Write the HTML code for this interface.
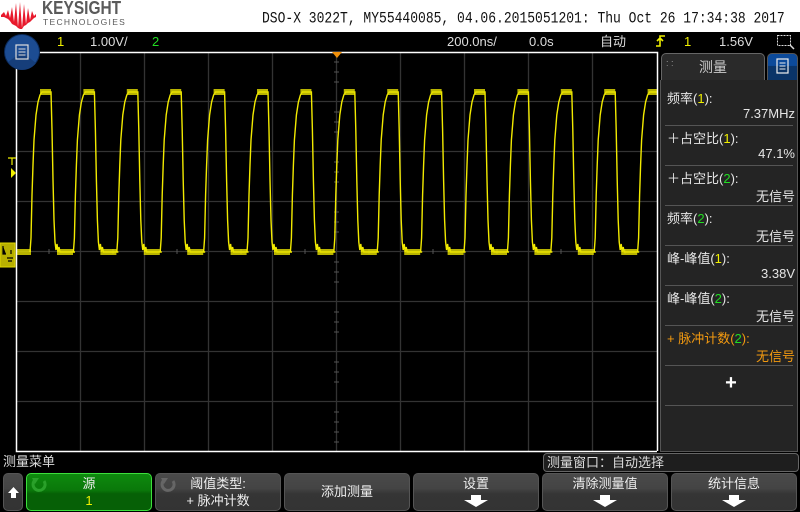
<!DOCTYPE html>
<html><head><meta charset="utf-8"><style>
*{margin:0;padding:0;box-sizing:border-box}
body{width:800px;height:512px;background:#000;position:relative;overflow:hidden;font-family:"Liberation Sans","Noto Sans CJK SC",sans-serif;color:#ddd}
.a{position:absolute;white-space:nowrap}
.hdr{left:0;top:0;width:800px;height:32px;background:#fff}
.bar{font-size:13px;top:33px;line-height:18px;color:#ddd}
.panel{left:660px;top:80px;width:138px;height:372px;background:#242424;border:1px solid #555;border-top:none}
.row{position:absolute;left:6px;width:128px;font-size:13px;color:#e6e6e6}
.lab{position:absolute;left:0;top:0}
.val{position:absolute;right:0;top:18px}
.sep{position:absolute;left:4px;width:128px;height:1px;background:#555}
.btn{position:absolute;top:473px;height:38px;border-radius:5px;background:linear-gradient(#4a4a4a 0,#444 40%,#353535 55%,#333 100%);border:1px solid #555;font-size:13px;color:#eee;text-align:center}
.dn{position:absolute;left:50%;margin-left:-12px;bottom:3px;width:24px;height:12px}
</style></head><body>
<div class="a hdr"></div>
<svg class="a" style="left:0;top:0" width="40" height="32"><polygon fill="#e8192c" points="1,15 4,12 6,16 8,10 10,18 12,7 14,22 16,3 18,27 20,2 22,28 24,4 26,24 28,8 30,20 32,11 34,16 36,14 36,17 34,18 32,20 30,22 28,23 26,25 24,26 22,29 20,29 18,28 16,26 14,25 12,24 10,21 8,19 6,18 4,17 1,17"/></svg>
<div class="a" style="left:42px;top:-1px;font-size:18px;font-weight:bold;color:#5a5a5a;line-height:19px;transform:scaleX(0.86);transform-origin:0 0">KEYSIGHT</div>
<div class="a" style="left:43px;top:17px;font-size:8.5px;color:#5a5a5a;letter-spacing:1.3px;line-height:10px">TECHNOLOGIES</div>
<div class="a" style="left:262px;top:10px;font-family:'Liberation Mono',monospace;font-size:13px;color:#111;line-height:18px;transform:scaleY(1.2)">DSO-X 3022T, MY55440085, 04.06.2015051201: Thu Oct 26 17:34:38 2017</div>

<div class="a bar" style="left:57px;color:#f0f000">1</div>
<div class="a bar" style="left:90px">1.00V/</div>
<div class="a bar" style="left:152px;color:#22dd22">2</div>
<div class="a bar" style="left:447px">200.0ns/</div>
<div class="a bar" style="left:529px">0.0s</div>
<div class="a bar" style="left:600px">自动</div>
<svg class="a" style="left:655px;top:34px" width="12" height="14"><path d="M1,12 H5 V2 H10 M2,7 L5,4 L8,7" stroke="#f0f000" stroke-width="1.6" fill="none"/></svg>
<div class="a bar" style="left:684px;color:#f0f000">1</div>
<div class="a bar" style="left:719px">1.56V</div>
<svg class="a" style="left:776px;top:33px" width="20" height="18"><rect x="1.5" y="2.5" width="13" height="10" stroke="#ddd" stroke-dasharray="2,1" fill="none"/><path d="M14,12 l4,4" stroke="#ddd" stroke-width="1.5"/></svg>

<svg class="a" style="left:0;top:0" width="800" height="512">
 <g stroke="#333" stroke-width="1.3">
  <line x1="80.5" y1="52" x2="80.5" y2="451"/><line x1="144.5" y1="52" x2="144.5" y2="451"/><line x1="208.5" y1="52" x2="208.5" y2="451"/><line x1="272.5" y1="52" x2="272.5" y2="451"/><line x1="336.5" y1="52" x2="336.5" y2="451"/><line x1="400.5" y1="52" x2="400.5" y2="451"/><line x1="464.5" y1="52" x2="464.5" y2="451"/><line x1="528.5" y1="52" x2="528.5" y2="451"/><line x1="592.5" y1="52" x2="592.5" y2="451"/>
  <line x1="16" y1="101.5" x2="657" y2="101.5"/><line x1="16" y1="151.5" x2="657" y2="151.5"/><line x1="16" y1="201.5" x2="657" y2="201.5"/><line x1="16" y1="251.5" x2="657" y2="251.5"/><line x1="16" y1="301.5" x2="657" y2="301.5"/><line x1="16" y1="351.5" x2="657" y2="351.5"/><line x1="16" y1="401.5" x2="657" y2="401.5"/>
 </g>
 <path d="M334,62h5M334,72h5M334,82h5M334,112h5M334,122h5M334,132h5M334,162h5M334,172h5M334,182h5M334,212h5M334,222h5M334,232h5M334,262h5M334,272h5M334,282h5M334,312h5M334,322h5M334,332h5M334,362h5M334,372h5M334,382h5M334,412h5M334,422h5M334,432h5M334,442h5M49,249v5M113,249v5M177,249v5M241,249v5M305,249v5M369,249v5M433,249v5M497,249v5M561,249v5M625,249v5" stroke="#555" stroke-width="1"/>
 <defs>
  <clipPath id="c"><rect x="17" y="53" width="640" height="398"/></clipPath>
  <g id="p">
   <path d="M-1,252 L0,238 L1,195 L2,165 L3,140 L5,115 L7,102 L9,95 L11,92 L20,92 L21,130 L22,180 L23,220 L24,242 L25,250 L26,244 L27,252 L28,247 L29,252 L44,252" stroke="#f2ea00" stroke-width="1.4" fill="none"/>
   <rect x="9" y="89" width="11" height="6" fill="#e6e000" opacity=".8"/>
   <rect x="26" y="249" width="16" height="6" fill="#e6e000" opacity=".8"/>
  </g>
 </defs>
 <g clip-path="url(#c)">
  <rect x="17" y="249" width="14" height="6" fill="#e6e000" opacity=".8"/>
  <use href="#p" x="31"/><use href="#p" x="74.4"/><use href="#p" x="117.8"/><use href="#p" x="161.2"/><use href="#p" x="204.6"/><use href="#p" x="248"/><use href="#p" x="291.4"/><use href="#p" x="334.8"/><use href="#p" x="378.2"/><use href="#p" x="421.6"/><use href="#p" x="465"/><use href="#p" x="508.4"/><use href="#p" x="551.8"/><use href="#p" x="595.2"/><use href="#p" x="638.6"/>
 </g>
 <path d="M16.5,52 V451.5 H657 M16,52.5 H657.5 V451" stroke="#fff" stroke-width="1.5" fill="none"/>
 <polygon points="332,52 342,52 337,58" fill="#f0900a"/>
 <path d="M8,158h8M12,158v7" stroke="#f0f000" stroke-width="1.2"/>
 <polygon points="11,168 16,173 11,178" fill="#f0f000"/>
 <rect x="0" y="243" width="15" height="24" fill="#b8b000" stroke="#e0d800"/>
 <path d="M3,246v8h3M11,250v4M7,258h6M8,261h4" stroke="#000" stroke-width="1.2"/>
 <circle cx="22" cy="52" r="17.5" fill="#1c4c92" stroke="#0b2a5a"/>
 <path d="M22,52 L8,62 A17,17 0 0 0 36,63 Z" fill="#163e7a"/>
 <rect x="16" y="45" width="12" height="14" fill="none" stroke="#ddd" stroke-width="1.2"/>
 <path d="M18.5,49h7M18.5,52h7M18.5,55h7" stroke="#ddd"/>
</svg>

<div class="a" style="left:661px;top:53px;width:104px;height:28px;background:#2a2a2a;border:1px solid #666;border-bottom:none;border-radius:5px 5px 0 0;font-size:14px;color:#ccc;text-align:center;line-height:26px">测量</div>
<div class="a" style="left:666px;top:61px;color:#999;font-size:9px;line-height:5px">: :<br></div>
<div class="a" style="left:767px;top:53px;width:31px;height:28px;background:linear-gradient(#0c4a9a 0,#0c4a9a 45%,#0a3468 46%,#0a3468 100%);border:1px solid #555;border-radius:5px 5px 0 0"></div>
<svg class="a" style="left:775px;top:57px" width="16" height="20"><rect x="2" y="2" width="11" height="14" fill="none" stroke="#eee" stroke-width="1.2"/><path d="M4.5,6h6M4.5,9h6M4.5,12h6" stroke="#eee"/></svg>
<div class="a panel"></div>
<div class="a" style="left:661px;top:80px;width:136px;height:371px">
 <div class="row" style="top:8px"><span class="lab">频率(<span style="color:#f0f000">1</span>):</span><span class="val">7.37MHz</span></div>
 <div class="sep" style="top:45px"></div>
 <div class="row" style="top:48px"><span class="lab">＋占空比(<span style="color:#f0f000">1</span>):</span><span class="val">47.1%</span></div>
 <div class="sep" style="top:85px"></div>
 <div class="row" style="top:88px"><span class="lab">＋占空比(<span style="color:#22dd22">2</span>):</span><span class="val">无信号</span></div>
 <div class="sep" style="top:125px"></div>
 <div class="row" style="top:128px"><span class="lab">频率(<span style="color:#22dd22">2</span>):</span><span class="val">无信号</span></div>
 <div class="sep" style="top:165px"></div>
 <div class="row" style="top:168px"><span class="lab">峰-峰值(<span style="color:#f0f000">1</span>):</span><span class="val">3.38V</span></div>
 <div class="sep" style="top:205px"></div>
 <div class="row" style="top:208px"><span class="lab">峰-峰值(<span style="color:#22dd22">2</span>):</span><span class="val">无信号</span></div>
 <div class="sep" style="top:245px"></div>
 <div class="row" style="top:248px;color:#f39a10"><span class="lab">+ 脉冲计数(<span style="color:#22dd22">2</span>):</span><span class="val">无信号</span></div>
 <div class="sep" style="top:285px"></div>
 <div class="row" style="top:292px;text-align:center;font-size:20px;font-weight:bold;color:#fff">+</div>
 <div class="sep" style="top:325px"></div>
</div>

<div class="a" style="left:3px;top:454px;font-size:13px;color:#ddd;line-height:16px">测量菜单</div>
<div class="a" style="left:543px;top:453px;width:256px;height:19px;background:#1e1e1e;border:1px solid #666;border-radius:4px;font-size:13px;color:#ddd;line-height:17px;padding-left:3px">测量窗口：自动选择</div>

<div class="btn" style="left:3px;width:20px"><svg style="position:absolute;left:3px;top:12px" width="13" height="13"><path d="M6.5,1 L12,7 H9 V12 H4 V7 H1 Z" fill="#fff"/></svg></div>
<div class="btn" style="left:26px;width:126px;background:linear-gradient(#0e8a0e,#0a780a 45%,#066006 55%,#066006);border:1px solid #3ce03c"><div style="line-height:18px;margin-top:1px">源</div><div style="color:#f0f000;line-height:16px">1</div><svg style="position:absolute;left:4px;top:2px" width="18" height="16"><path d="M4,4 A6,6 0 1 0 13,5" stroke="#2aa02a" stroke-width="3" fill="none"/><polygon points="1,2 8,2 4,8" fill="#2aa02a"/></svg></div>
<div class="btn" style="left:155px;width:126px"><div style="line-height:18px;margin-top:1px">阈值类型:</div><div style="line-height:16px">+ 脉冲计数</div><svg style="position:absolute;left:4px;top:2px" width="18" height="16"><path d="M4,4 A6,6 0 1 0 13,5" stroke="#666" stroke-width="3" fill="none"/><polygon points="1,2 8,2 4,8" fill="#666"/></svg></div>
<div class="btn" style="left:284px;width:126px;line-height:36px">添加测量</div>
<div class="btn" style="left:413px;width:126px"><div style="line-height:18px;margin-top:1px">设置</div><svg class="dn" viewBox="0 0 24 12"><path d="M7,0 H17 V5 H24 L12,12 L0,5 H7 Z" fill="#fff"/></svg></div>
<div class="btn" style="left:542px;width:126px"><div style="line-height:18px;margin-top:1px">清除测量值</div><svg class="dn" viewBox="0 0 24 12"><path d="M7,0 H17 V5 H24 L12,12 L0,5 H7 Z" fill="#fff"/></svg></div>
<div class="btn" style="left:671px;width:126px"><div style="line-height:18px;margin-top:1px">统计信息</div><svg class="dn" viewBox="0 0 24 12"><path d="M7,0 H17 V5 H24 L12,12 L0,5 H7 Z" fill="#fff"/></svg></div>
</body></html>
